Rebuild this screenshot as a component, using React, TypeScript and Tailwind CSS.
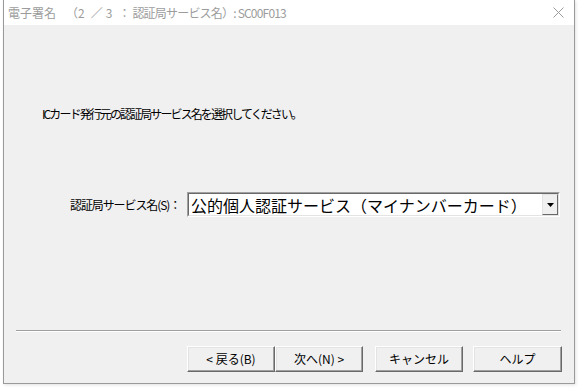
import React from "react";

const font = { fontFamily: '"Noto Sans CJK JP", "Noto Sans", sans-serif' };

function Btn({ children, className = "" }: { children: React.ReactNode; className?: string }) {
  return (
    <div
      className={`h-[26px] w-[88px] flex items-center justify-center text-[12px] text-black bg-[#f0f0f0] border border-t-white border-l-white border-r-[#696969] border-b-[#696969] shadow-[inset_-1px_-1px_0_#a0a0a0,inset_1px_1px_0_#e3e3e3] ${className}`}
    >
      {children}
    </div>
  );
}

export default function App() {
  return (
    <div className="w-[583px] h-[388px] bg-white" style={font}>
      <div className="ml-[3px] w-[572px] h-[384px] border-l border-r border-b border-[#9a9a9a] flex flex-col shadow-[1px_1px_3px_rgba(0,0,0,0.12)]">
        <div className="h-[25px] bg-white flex items-center pl-[4px] pr-[10px] shrink-0">
          <div className="flex items-center text-[12px] text-[#9c9c9c] leading-none whitespace-nowrap">
            <span>電子署名</span>
            <span className="ml-[10px]">（</span>
            <span className="ml-[0px]">2</span>
            <span className="ml-[6px]">／</span>
            <span className="ml-[3px]">3</span>
            <span className="ml-[6px]">：</span>
            <span className="ml-[2px] tracking-[-0.8px]">認証局サービス名）</span>
            <span className="tracking-[-0.8px]">: SC00F013</span>
          </div>
          <div className="ml-auto">
            <svg width="11" height="11" viewBox="0 0 11 11">
              <path d="M0.5 0.5 L10.5 10.5 M10.5 0.5 L0.5 10.5" stroke="#9a9a9a" strokeWidth="1" />
            </svg>
          </div>
        </div>
        <div className="flex-1 bg-[#f0f0f0] flex flex-col">
          <div className="mt-[81px] ml-[38px] h-[16px] leading-[16px] text-[12px] text-black tracking-[-1.9px]">
            ICカード発行元の認証局サービス名を選択してください。
          </div>
          <div className="mt-[70px] flex items-center h-[25px]">
            <div className="ml-[66px] w-[110px] text-[12px] text-black tracking-[-1.1px] whitespace-nowrap">
              認証局サービス名(S)：
            </div>
            <div className="ml-[7px] w-[373px] h-[25px] border border-t-[#a0a0a0] border-l-[#a0a0a0] border-r-white border-b-white">
              <div className="w-full h-full border border-t-[#696969] border-l-[#696969] border-r-[#e3e3e3] border-b-[#e3e3e3] bg-white flex items-center">
                <span className="pl-[2px] text-[16px] leading-none text-black whitespace-nowrap">
                  公的個人認証サービス（マイナンバーカード）
                </span>
                <div className="ml-auto w-[16px] h-full bg-[#f0f0f0] border border-t-[#e3e3e3] border-l-[#e3e3e3] border-r-[#696969] border-b-[#696969] flex items-center justify-center">
                  <svg width="7" height="4" viewBox="0 0 7 4">
                    <path d="M0 0 H7 L3.5 4 Z" fill="#000" />
                  </svg>
                </div>
              </div>
            </div>
          </div>
          <div className="mt-[113px] ml-[12px] w-[545px] border-t border-t-[#a0a0a0] border-b border-b-white" />
          <div className="mt-[14px] flex justify-end pr-[12px]">
            <Btn>&lt; 戻る(B)</Btn>
            <Btn>次へ(N) &gt;</Btn>
            <Btn className="ml-[12px]">キャンセル</Btn>
            <Btn className="ml-[10px] w-[89px]">ヘルプ</Btn>
          </div>
        </div>
      </div>
    </div>
  );
}
